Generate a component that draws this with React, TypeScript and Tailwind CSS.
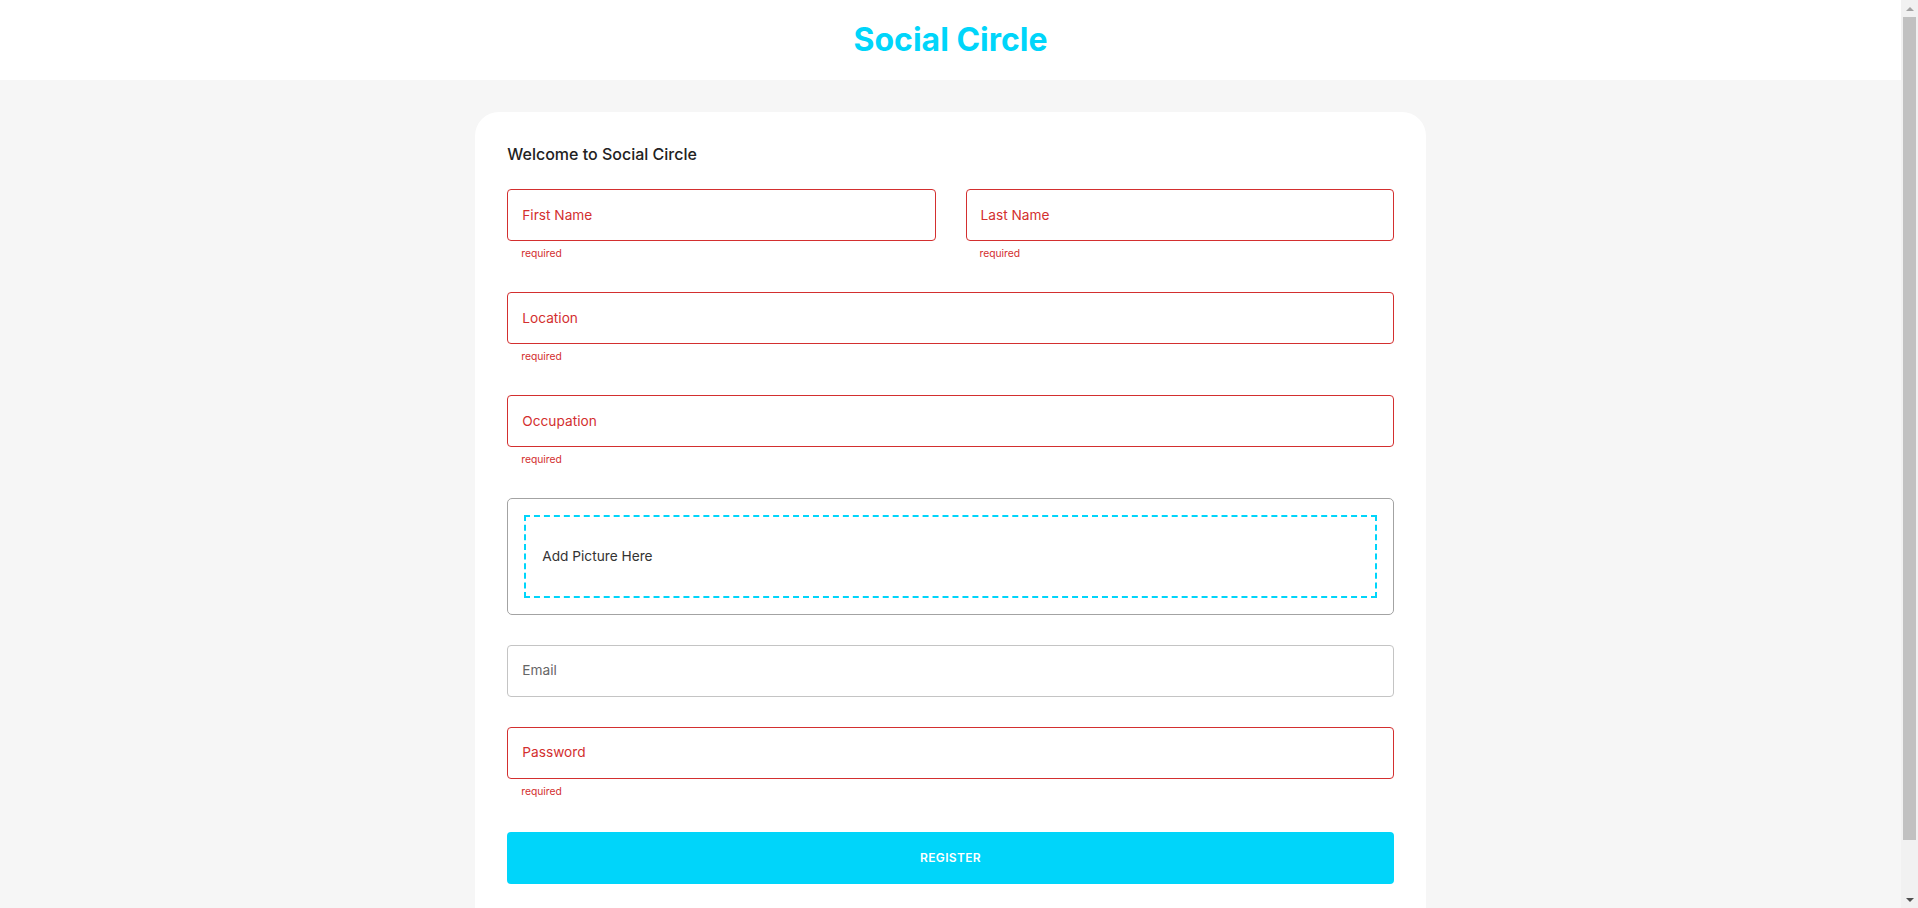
import React from "react";

const font = { fontFamily: "Inter, 'Noto Sans', sans-serif" };

type FieldProps = {
    label: string;
    error?: boolean;
    span?: string;
};

const Field = ({ label, error = true, span = "col-span-4" }: FieldProps) => (
    <div className={span}>
        <div
            className={`flex h-[52px] items-center rounded-[4px] border px-[14px] ${
                error ? "border-[#d32f2f]" : "border-[#c4c4c4]"
            }`}
        >
            <span className={`text-[13.7px] leading-[1.4375] ${error ? "text-[#d32f2f]" : "text-[#666666]"}`}>
                {label}
            </span>
        </div>
        {error && (
            <p className="mx-[14px] mt-[3px] text-[10.3px] leading-[18px] text-[#d32f2f]">required</p>
        )}
    </div>
);

// browser scrollbar as seen in the screenshot
const Scrollbar = () => (
    <div className="sticky top-0 flex h-screen w-[17px] shrink-0 flex-col items-center bg-[#f1f1f1]">
        <div className="flex h-[17px] items-center justify-center">
            <svg width="8" height="4" viewBox="0 0 8 4"><path d="M0 4 L4 0 L8 4 Z" fill="#a3a3a3" /></svg>
        </div>
        <div className="w-[13px] flex-1 bg-[#c1c1c1]" />
        <div className="h-[51px]" />
        <div className="flex h-[17px] items-center justify-center">
            <svg width="8" height="4" viewBox="0 0 8 4"><path d="M0 0 L8 0 L4 4 Z" fill="#505050" /></svg>
        </div>
    </div>
);

const App = () => {
    return (
        <div className="flex min-h-screen items-start bg-[#f6f6f6]" style={font}>
            <div className="min-w-0 flex-1">
                {/* Header */}
                <header className="w-full bg-white px-[6%] py-4 text-center">
                    <h1 className="text-[32px] font-bold leading-[1.5] text-[#00d5fa]">Social Circle</h1>
                </header>

                {/* Register card */}
                <div className="mx-auto my-8 w-1/2 rounded-3xl bg-white p-8">
                    <h5 className="mb-6 text-[16px] font-medium leading-[1.334] text-[#222222]">
                        Welcome to Social Circle
                    </h5>

                    <form className="grid grid-cols-4 gap-[30px]">
                        <Field label="First Name" span="col-span-2" />
                        <Field label="Last Name" span="col-span-2" />
                        <Field label="Location" />
                        <Field label="Occupation" />

                        <div className="col-span-4 rounded-[5px] border border-[#a3a3a3] p-4">
                            <div className="cursor-pointer border-2 border-dashed border-[#00d5fa] px-4 py-4">
                                <p className="my-[13.7px] text-[13.7px] leading-[1.43] text-[#333333]">Add Picture Here</p>
                            </div>
                        </div>

                        <Field label="Email" error={false} />
                        <Field label="Password" />

                        <div className="col-span-4">
                            <button
                                type="button"
                                className="mb-8 mt-[2px] w-full rounded-[4px] bg-[#00d5fa] p-4 text-[12px] font-semibold uppercase leading-[1.6] tracking-[0.02857em] text-white"
                            >
                                Register
                            </button>
                        </div>
                    </form>
                </div>
            </div>
            <Scrollbar />
        </div>
    );
};

export default App;
